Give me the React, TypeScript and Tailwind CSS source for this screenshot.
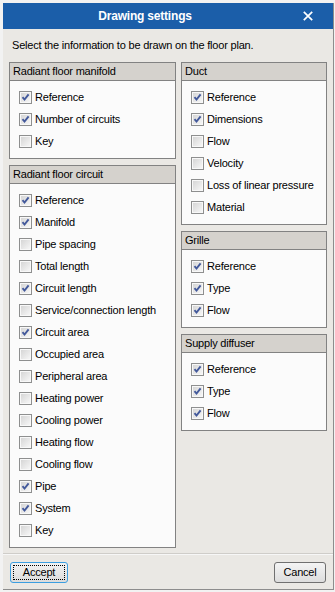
import React from "react";

type Item = { label: string; checked: boolean };
type Group = { title: string; items: Item[] };

const manifold: Group = {
  title: "Radiant floor manifold",
  items: [
    { label: "Reference", checked: true },
    { label: "Number of circuits", checked: true },
    { label: "Key", checked: false },
  ],
};

const circuit: Group = {
  title: "Radiant floor circuit",
  items: [
    { label: "Reference", checked: true },
    { label: "Manifold", checked: true },
    { label: "Pipe spacing", checked: false },
    { label: "Total length", checked: false },
    { label: "Circuit length", checked: true },
    { label: "Service/connection length", checked: false },
    { label: "Circuit area", checked: true },
    { label: "Occupied area", checked: false },
    { label: "Peripheral area", checked: false },
    { label: "Heating power", checked: false },
    { label: "Cooling power", checked: false },
    { label: "Heating flow", checked: false },
    { label: "Cooling flow", checked: false },
    { label: "Pipe", checked: true },
    { label: "System", checked: true },
    { label: "Key", checked: false },
  ],
};

const duct: Group = {
  title: "Duct",
  items: [
    { label: "Reference", checked: true },
    { label: "Dimensions", checked: true },
    { label: "Flow", checked: false },
    { label: "Velocity", checked: false },
    { label: "Loss of linear pressure", checked: false },
    { label: "Material", checked: false },
  ],
};

const grille: Group = {
  title: "Grille",
  items: [
    { label: "Reference", checked: true },
    { label: "Type", checked: true },
    { label: "Flow", checked: true },
  ],
};

const diffuser: Group = {
  title: "Supply diffuser",
  items: [
    { label: "Reference", checked: true },
    { label: "Type", checked: true },
    { label: "Flow", checked: true },
  ],
};

function CheckBox({ checked }: { checked: boolean }) {
  return (
    <span className="w-[13px] h-[13px] shrink-0 border border-[#8e8f8f] bg-[#f4f4f4] flex">
      <span className="flex-1 border border-[#f8f8f8] bg-gradient-to-br from-[#d6d6d6] to-[#f6f6f6] relative">
        {checked && (
          <svg width="11" height="11" viewBox="0 0 11 11" className="absolute -left-px -top-px">
            <path d="M2.5 5.2 L4.5 7.6 L8.6 2.4" fill="none" stroke="#43599b" strokeWidth="1.9" />
          </svg>
        )}
      </span>
    </span>
  );
}

function GroupBox({ group }: { group: Group }) {
  return (
    <div className="border border-[#828282] bg-[#fbfbfb] flex flex-col">
      <div className="h-[18px] bg-[#d5d2cd] border-b border-[#828282] px-[3px] flex items-center">
        {group.title}
      </div>
      <div className="pt-[5px] pb-[6px] pl-[9px] flex flex-col">
        {group.items.map((item, i) => (
          <div key={i} className="h-[22px] flex items-center gap-[3px]">
            <CheckBox checked={item.checked} />
            <span>{item.label}</span>
          </div>
        ))}
      </div>
    </div>
  );
}

export default function App() {
  return (
    <div
      className="w-[335px] h-[592px] bg-[#f2f2f2] pt-[3px] pl-[3px] pr-[1px] pb-[2px] flex text-[11px] leading-[13px] tracking-[-0.2px] text-black"
      style={{ fontFamily: '"Liberation Sans", Arial, sans-serif' }}
    >
      <div className="flex-1 flex flex-col border-r border-b border-[#8d8d8d] bg-[#eae8e4]">
        <div className="h-[26px] bg-[#1b5ea9] flex items-center relative pr-[46px]">
          <span className="flex-1 text-center text-white font-bold text-[12px]">Drawing settings</span>
          <svg width="10" height="10" viewBox="0 0 10 10" className="absolute left-[300px] top-[8px]">
            <path d="M0.8 0.8 L9.2 9.2 M9.2 0.8 L0.8 9.2" stroke="#ffffff" strokeWidth="1.7" />
          </svg>
        </div>
        <div className="pt-[10px] pl-[9px]">Select the information to be drawn on the floor plan.</div>
        <div className="mt-[10px] pl-[6px] flex gap-[5px] items-start">
          <div className="w-[167px] flex flex-col gap-[6px]">
            <GroupBox group={manifold} />
            <GroupBox group={circuit} />
          </div>
          <div className="w-[146px] flex flex-col gap-[6px]">
            <GroupBox group={duct} />
            <GroupBox group={grille} />
            <GroupBox group={diffuser} />
          </div>
        </div>
        <div className="mt-[5px] h-px bg-[#cfcdc9]" />
        <div className="h-px bg-[#f7f7f7]" />
        <div className="pt-[7px] px-[7px] flex justify-between">
          <button className="w-[58px] h-[21px] rounded-[3px] border border-[#3c9ee0] bg-gradient-to-b from-[#f2f2f2] to-[#dcdcdc] p-[2px] flex">
            <span className="flex-1 border border-dotted border-black flex items-center justify-center">Accept</span>
          </button>
          <button className="w-[52px] h-[21px] rounded-[3px] border border-[#707070] bg-gradient-to-b from-[#f4f4f4] to-[#dddddd] flex items-center justify-center">
            Cancel
          </button>
        </div>
      </div>
    </div>
  );
}
